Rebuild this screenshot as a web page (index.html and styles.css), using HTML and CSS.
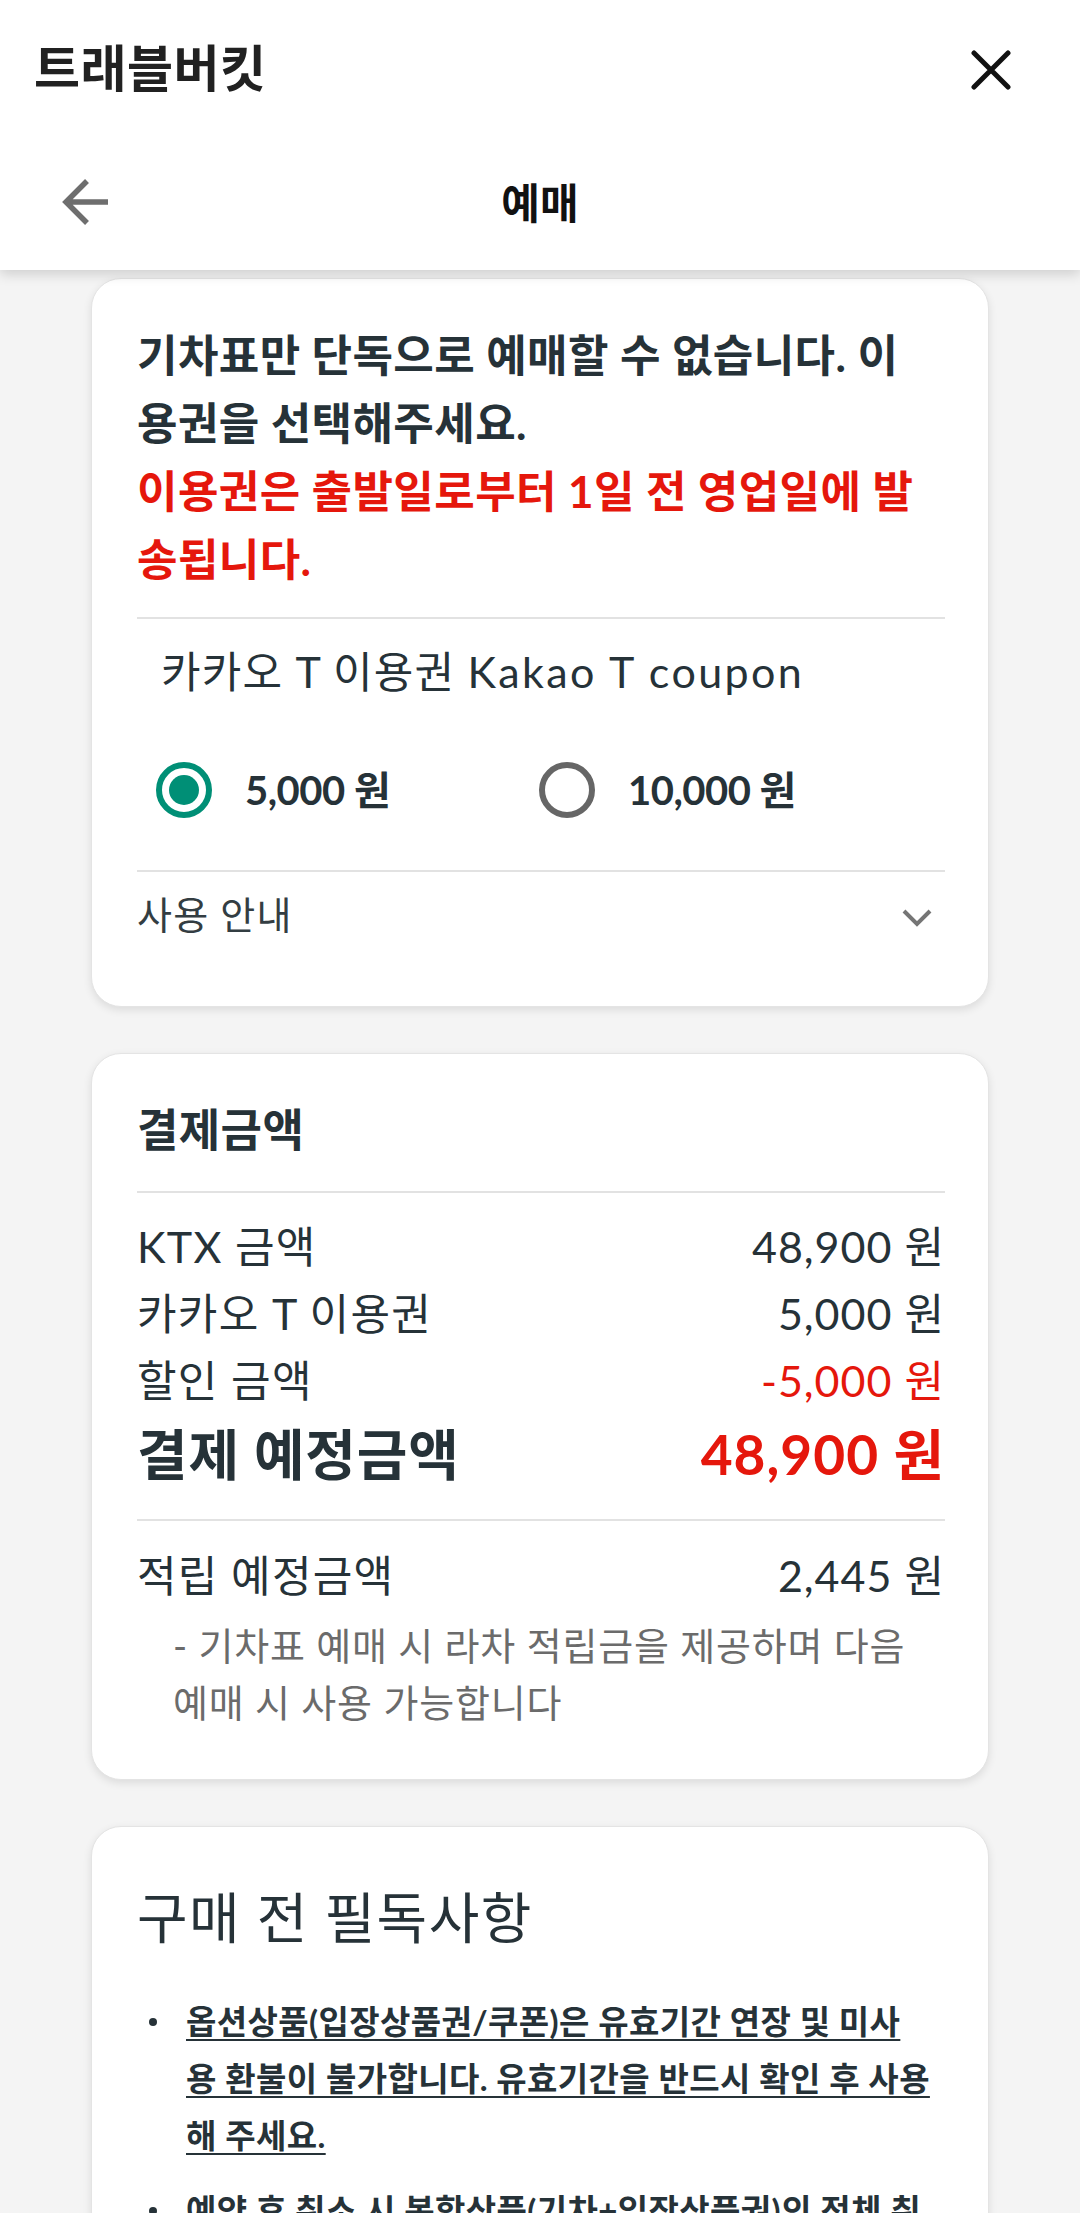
FILE: index.html
```html
<!DOCTYPE html>
<html lang="ko">
<head>
<meta charset="utf-8">
<title>예매</title>
<link rel="stylesheet" href="styles.css">
</head>
<body>
<header class="appbar">
  <div class="appbar-top">
    <h1 class="brand">트래블버킷</h1>
    <svg class="icon-close" viewBox="0 0 40 40" aria-hidden="true"><path d="M3 3 L37 37 M37 3 L3 37"/></svg>
  </div>
  <div class="appbar-nav">
    <svg class="icon-back" viewBox="0 0 48 48" aria-hidden="true"><path d="M25 2 L4 23 L25 44 M4 23 H46"/></svg>
    <h2 class="page-title">예매</h2>
    <span class="nav-spacer"></span>
  </div>
</header>

<main class="content">
  <section class="card card-coupon">
    <p class="notice">기차표만 단독으로 예매할 수 없습니다. 이<br>용권을 선택해주세요.<br><span class="notice-red">이용권은 출발일로부터 1일 전 영업일에 발<br>송됩니다.</span></p>
    <div class="rule"></div>
    <p class="coupon-name">카카오 T 이용권 <span class="latin">Kakao T coupon</span></p>
    <div class="options">
      <label class="option">
        <span class="radio radio-on"><span class="radio-dot"></span></span>
        <span class="option-label">5,000 원</span>
      </label>
      <label class="option">
        <span class="radio radio-off"></span>
        <span class="option-label">10,000 원</span>
      </label>
    </div>
    <div class="rule"></div>
    <div class="guide">
      <span class="guide-text">사용 안내</span>
      <svg class="icon-chevron" viewBox="0 0 30 18" aria-hidden="true"><path d="M2 2 L15 15 L28 2"/></svg>
    </div>
  </section>

  <section class="card card-pay">
    <h3 class="card-title">결제금액</h3>
    <div class="rule"></div>
    <div class="rows">
      <div class="row"><span>KTX 금액</span><span class="num">48,900 원</span></div>
      <div class="row"><span>카카오 T 이용권</span><span class="num">5,000 원</span></div>
      <div class="row"><span>할인 금액</span><span class="num red">-5,000 원</span></div>
      <div class="row row-total"><span>결제 예정금액</span><span class="num red">48,900 원</span></div>
    </div>
    <div class="rule rule-mid"></div>
    <div class="row row-point"><span>적립 예정금액</span><span class="num">2,445 원</span></div>
    <p class="point-note">- 기차표 예매 시 라차 적립금을 제공하며 다음 예매 시 사용 가능합니다</p>
  </section>

  <section class="card card-notice">
    <h3 class="notice-title">구매 전 필독사항</h3>
    <ul class="must-read">
      <li><span>옵션상품(입장상품권/쿠폰)은 유효기간 연장 및 미사<br>용 환불이 불가합니다. 유효기간을 반드시 확인 후 사용<br>해 주세요.</span></li>
      <li><span>예약 후 취소 시 복합상품(기차+입장상품권)의 전체 취<br>소만 가능합니다.</span></li>
      <li><span>이용권은 출발일로부터 1일 전 영업일에 발송됩니다.</span></li>
    </ul>
  </section>
</main>
</body>
</html>
```

FILE: styles.css
```css
* { box-sizing: border-box; }

html, body {
  margin: 0;
  padding: 0;
}

body {
  background: #f4f4f4;
  font-family: Lato, "Noto Sans CJK KR", sans-serif;
  color: #263238;
  width: 1080px;
  min-height: 2213px;
}

h1, h2, h3, p, ul { margin: 0; padding: 0; }

/* ---------- App bar ---------- */
.appbar {
  background: #ffffff;
  box-shadow: 0 4px 12px rgba(0, 0, 0, 0.16);
  position: relative;
  z-index: 2;
}

.appbar-top {
  height: 135px;
  display: flex;
  align-items: center;
  justify-content: space-between;
  padding: 0 69px 0 34px;
}

.brand {
  font-size: 50px;
  font-weight: 700;
  color: #212121;
  line-height: 60px;
  letter-spacing: 0.5px;
}

.icon-close {
  width: 40px;
  height: 40px;
  margin-top: 4px;
  fill: none;
  stroke: #111111;
  stroke-width: 5;
  stroke-linecap: round;
}

.appbar-nav {
  height: 135px;
  display: grid;
  grid-template-columns: 1fr auto 1fr;
  align-items: center;
  padding: 0 62px;
}

.icon-back {
  width: 48px;
  height: 48px;
  fill: none;
  stroke: #6e6e6e;
  stroke-width: 5.5;
  stroke-linejoin: miter;
}

.page-title {
  font-size: 42px;
  font-weight: 700;
  color: #111111;
  line-height: 60px;
}

/* ---------- Cards ---------- */
.content {
  padding: 8px 91px 0 91px;
  display: flex;
  flex-direction: column;
  gap: 46px;
}

.card {
  background: #ffffff;
  border: 1px solid #e4e4e4;
  border-radius: 30px;
  box-shadow: 0 3px 8px rgba(0, 0, 0, 0.10);
  padding: 0 43px 0 45px;
}

.rule {
  height: 2px;
  background: #e2e2e2;
}

/* Card 1 */
.card-coupon {
  padding-top: 42px;
  padding-bottom: 46px;
}

.notice {
  font-size: 44px;
  font-weight: 700;
  line-height: 68px;
  letter-spacing: 0.4px;
  color: #263238;
  margin-bottom: 24px;
}

.notice-red {
  color: #e5170c;
}

.coupon-name {
  margin-top: 23px;
  margin-bottom: 3px;
  padding-left: 24px;
  font-size: 43px;
  line-height: 60px;
  letter-spacing: 1.2px;
  color: #263238;
}

.coupon-name .latin {
  letter-spacing: 2.4px;
}

.options {
  display: grid;
  grid-template-columns: 383px 1fr;
  padding: 57px 0 52px 19px;
}

.option {
  display: flex;
  align-items: center;
  gap: 33px;
}

.radio {
  width: 56px;
  height: 56px;
  border-radius: 50%;
  display: flex;
  align-items: center;
  justify-content: center;
}

.radio-on {
  border: 6px solid #008f76;
}

.radio-dot {
  width: 30px;
  height: 30px;
  border-radius: 50%;
  background: #008f76;
}

.radio-off {
  border: 6px solid #666666;
}

.option-label {
  font-size: 40px;
  font-weight: 700;
  line-height: 56px;
  color: #263238;
  letter-spacing: -0.5px;
}

.guide {
  height: 88px;
  display: flex;
  align-items: center;
  justify-content: space-between;
  font-size: 38px;
  letter-spacing: 1.2px;
  color: #333d42;
}

.guide-text {
  margin-bottom: 8px;
}

.icon-chevron {
  width: 30px;
  height: 18px;
  margin-right: 13px;
  margin-top: 4px;
  fill: none;
  stroke: #757575;
  stroke-width: 4;
}

/* Card 2 */
.card-pay {
  padding-top: 46px;
  padding-bottom: 48px;
}

.card-title {
  font-size: 45px;
  font-weight: 700;
  line-height: 60px;
  letter-spacing: 0.4px;
  color: #263238;
  margin-bottom: 31px;
}

.rows {
  padding-top: 20px;
}

.row {
  display: flex;
  justify-content: space-between;
  align-items: center;
  font-size: 43px;
  line-height: 67px;
  letter-spacing: 1.3px;
  color: #263238;
}

.num {
  letter-spacing: 1px;
}

.red {
  color: #e5170c;
}

.row-total {
  font-size: 55px;
  font-weight: 700;
  line-height: 80px;
  letter-spacing: 0.8px;
}

.row-total .num {
  letter-spacing: 1px;
}

.rule-mid {
  margin-top: 25px;
}

.row-point {
  margin-top: 21px;
}

.point-note {
  margin-top: 8px;
  padding-left: 36px;
  font-size: 38px;
  line-height: 57px;
  letter-spacing: 0.8px;
  color: #6b6b6b;
}

/* Card 3 */
.card-notice {
  padding-top: 55px;
  padding-bottom: 60px;
}

.notice-title {
  font-size: 55px;
  font-weight: 400;
  line-height: 70px;
  letter-spacing: 1.5px;
  color: #263238;
}

.must-read {
  list-style: none;
  margin-top: 41px;
  display: flex;
  flex-direction: column;
  gap: 18px;
}

.must-read li {
  display: flex;
  align-items: flex-start;
  font-size: 33px;
  font-weight: 700;
  line-height: 57px;
  letter-spacing: 0.4px;
  color: #263238;
}

.must-read li::before {
  content: "";
  flex: none;
  width: 8px;
  height: 8px;
  border-radius: 50%;
  background: #263238;
  margin: 25px 29px 0 12px;
}

.must-read li span {
  text-decoration: underline;
  text-underline-offset: 5px;
  text-decoration-thickness: 2px;
}
```
